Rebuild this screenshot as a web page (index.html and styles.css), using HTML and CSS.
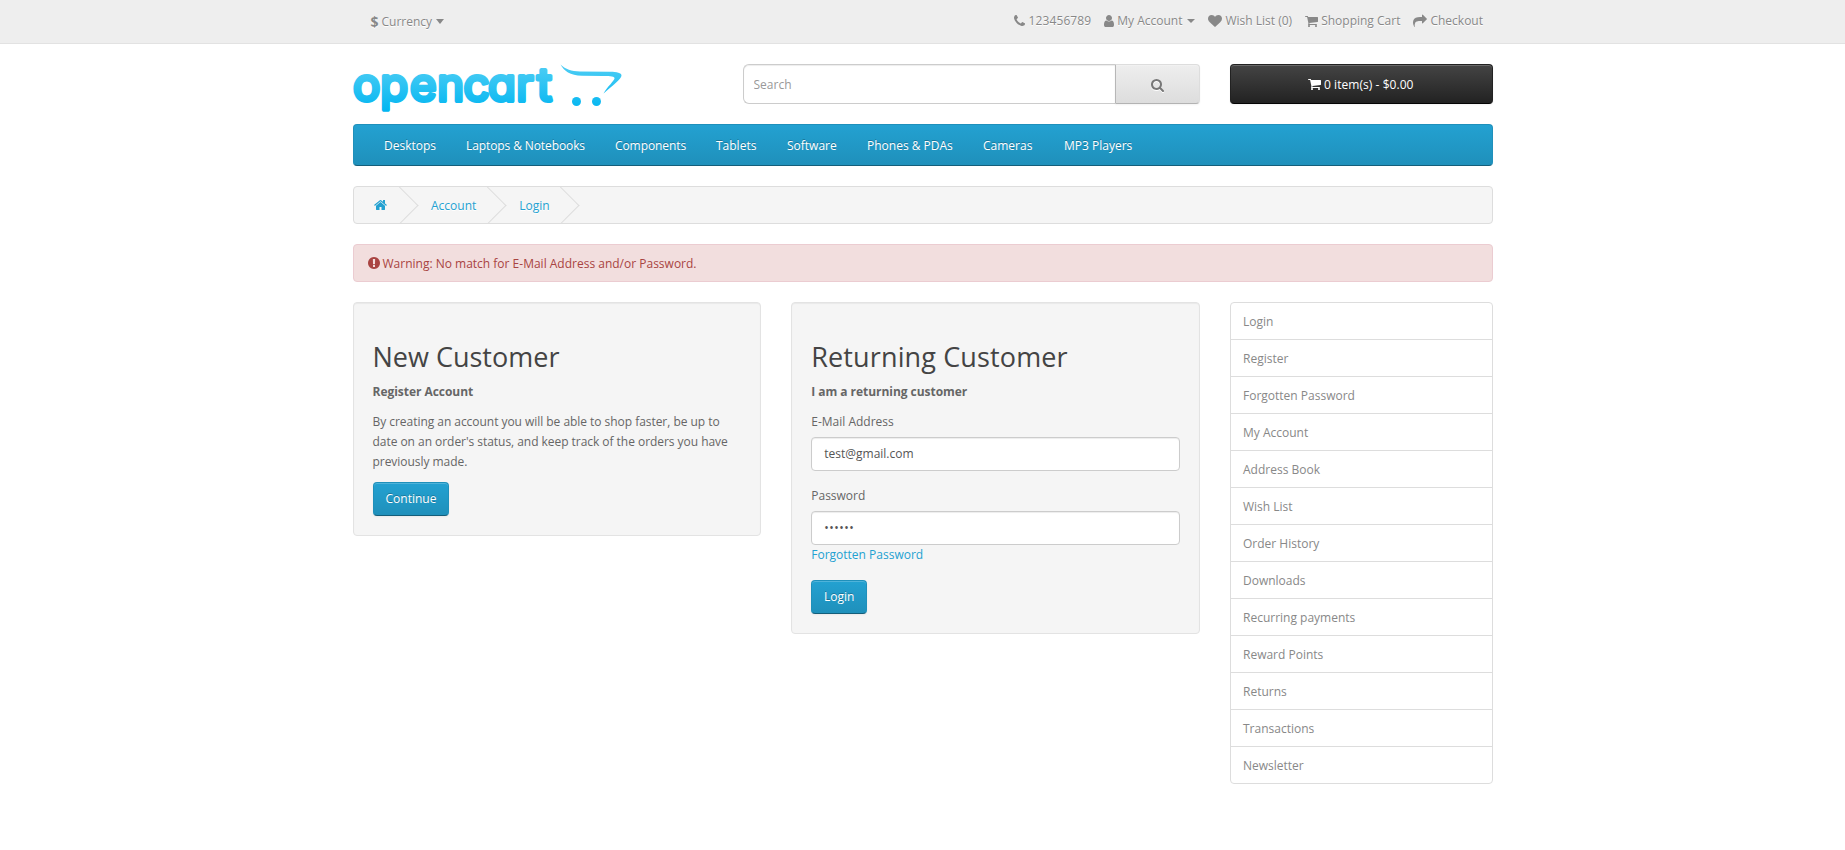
FILE: index.html
```html
<!DOCTYPE html>
<html lang="en">
<head>
<meta charset="utf-8">
<title>Account Login</title>
<link rel="stylesheet" href="styles.css">
</head>
<body>
<svg class="defs" width="0" height="0" aria-hidden="true">
  <symbol id="phone" viewBox="192 0 1408 1792"><path d="M1600 1240q0 27-10 70.5t-21 68.5q-21 50-122 106-94 51-186 51-27 0-53-3.5t-57.5-12.5-47-14.5-55.5-20.5-49-18q-98-35-175-83-127-79-264-216t-216-264q-48-77-83-175-3-9-18-49t-20.5-55.5-14.500-47-12.500-57.500-3.500-53q0-92 51-186 56-101 106-122 25-11 68.500-21t70.500-10q14 0 21 3 18 6 53 76 11 19 30 54t35 63.500 31 53.500q3 4 17.500 25t21.500 35.500 7 28.500q0 20-28.500 50t-62 55-62 53-28.500 46q0 9 5 22.500t8.500 20.500 14 24 11.500 19q76 137 174 235t235 174q2 1 19 11.500t24 14 20.500 8.500 22.500 5q18 0 46-28.500t53-62 55-62 50-28.500q14 0 28.500 7t35.500 21.500 25 17.500q25 15 53.500 31t63.500 35 54 30q70 35 76 53 3 7 3 21z"/></symbol>
  <symbol id="user" viewBox="256 0 1280 1792"><path d="M1536 1399q0 109-62.500 187t-150.500 78h-854q-88 0-150.500-78t-62.500-187q0-85 8.500-160.500t31.500-152 58.500-131 94-89 134.500-34.500q131 128 313 128t313-128q76 0 134.500 34.500t94 89 58.500 131 31.500 152 8.500 160.500zm-256-887q0 159-112.500 271.500t-271.500 112.500-271.500-112.500-112.500-271.500 112.500-271.500 271.500-112.500 271.500 112.500 112.500 271.500z"/></symbol>
  <symbol id="heart" viewBox="0 0 1792 1792"><path d="M896 1664q-26 0-44-18l-624-602q-10-8-27.500-26t-55.500-65.500-68-97.500-53.500-121-23.500-138q0-220 127-344t351-124q62 0 126.500 21.500t120 58 95.500 68.500 76 68q36-36 76-68t95.500-68.500 120-58 126.500-21.500q224 0 351 124t127 344q0 221-229 450l-623 600q-18 18-44 18z"/></symbol>
  <symbol id="cart" viewBox="64 0 1664 1792"><path d="M704 1536q0 52-38 90t-90 38-90-38-38-90 38-90 90-38 90 38 38 90zm896 0q0 52-38 90t-90 38-90-38-38-90 38-90 90-38 90 38 38 90zm128-1088v512q0 24-16.500 42.500t-40.500 21.500l-1044 122q13 60 13 70 0 16-24 64h920q26 0 45 19t19 45-19 45-45 19h-1024q-26 0-45-19t-19-45q0-11 8-31.500t16-36 21.500-40 15.500-29.500l-177-823h-204q-26 0-45-19t-19-45 19-45 45-19h256q16 0 28.500 6.500t19.500 15.500 13 24.500 8 26 5.500 29.500 4.500 26h1201q26 0 45 19t19 45z"/></symbol>
  <symbol id="share" viewBox="0 0 1792 1792"><path d="M1792 640q0 26-19 45l-512 512q-19 19-45 19t-45-19-19-45v-256h-224q-98 0-175.500 6t-154 21.500-133 42.500-105.500 69.500-80 101-48.500 138.500-17.500 181q0 55 5 123 0 6 2.500 23.500t2.500 26.500q0 15-8.500 25t-23.500 10q-16 0-28-17-7-9-13-22t-13.500-30-10.500-24q-127-285-127-451 0-199 53-333 162-403 875-403h224v-256q0-26 19-45t45-19 45 19l512 512q19 19 19 45z"/></symbol>
  <symbol id="search" viewBox="64 128 1664 1664"><path d="M1216 832q0-185-131.500-316.500t-316.500-131.500-316.500 131.500-131.500 316.500 131.500 316.500 316.500 131.500 316.500-131.500 131.500-316.500zm512 832q0 52-38 90t-90 38q-54 0-90-38l-343-342q-179 124-399 124-143 0-273.500-55.500t-225-150-150-225-55.500-273.500 55.500-273.500 150-225 225-150 273.500-55.500 273.500 55.500 225 150 150 225 55.500 273.500q0 220-124 399l343 343q37 37 37 90z"/></symbol>
  <symbol id="home" viewBox="64 0 1664 1792"><path d="M1472 992v480q0 26-19 45t-45 19h-384v-384h-256v384h-384q-26 0-45-19t-19-45v-480q0-1 .5-3t.5-3l575-474 575 474q1 2 1 6zm223-69l-62 74q-8 9-21 11h-3q-13 0-21-7l-692-577-692 577q-12 8-24 7-13-2-21-11l-62-74q-8-10-7-23.500t11-21.500l719-599q32-26 76-26t76 26l244 204v-195q0-14 9-23t23-9h192q14 0 23 9t9 23v408l219 182q10 8 11 21.500t-7 23.500z"/></symbol>
  <symbol id="warn" viewBox="128 0 1536 1792"><path d="M896 128q209 0 385.500 103t279.500 279.500 103 385.500-103 385.500-279.500 279.500-385.500 103-385.500-103-279.500-279.500-103-385.500 103-385.500 279.500-279.500 385.500-103zm128 1247v-190q0-14-9-23.500t-22-9.500h-192q-13 0-23 10t-10 23v190q0 13 10 23t23 10h192q13 0 22-9.500t9-23.500zm-2-344l18-621q0-12-10-18-10-8-24-8h-220q-14 0-24 8-10 6-10 18l17 621q0 10 10 17.500t24 7.500h185q14 0 23.500-7.500t10.500-17.500z"/></symbol>
</svg>

<nav class="top">
  <div class="container top-row">
    <button class="currency" type="button"><strong>$</strong> <span>Currency</span><i class="caret"></i></button>
    <ul class="top-links">
      <li class="number"><svg class="icon w11"><use href="#phone"/></svg>123456789</li>
      <li><svg class="icon w10"><use href="#user"/></svg>My Account<i class="caret"></i></li>
      <li><svg class="icon w14"><use href="#heart"/></svg>Wish List (0)</li>
      <li><svg class="icon w13"><use href="#cart"/></svg>Shopping Cart</li>
      <li><svg class="icon w14"><use href="#share"/></svg>Checkout</li>
    </ul>
  </div>
</nav>

<header class="container header">
  <div class="logo">
    <svg width="270" height="50" viewBox="0 0 270 50">
      <defs>
        <linearGradient id="blue" gradientUnits="userSpaceOnUse" x1="0" y1="2" x2="0" y2="48">
          <stop offset="0" stop-color="#4dcdf4"/><stop offset="1" stop-color="#00b5f1"/>
        </linearGradient>
      </defs>
      <text class="wordmark" x="0 27.300 57 84.200 110.500 135 163.300 184" y="36.500" fill="url(#blue)" stroke="url(#blue)">opencart</text>
      <path fill="url(#blue)" d="M207.500 0.500C213 5.500 218 7.300 227 7.400L257 7.800C264 8 268.500 9 268.500 11.500C268.500 15 259 22 250.500 29.500C255 22 261 17 261.500 14.500C261.800 12.500 258 12 250 12L229 11.800C217 11.500 211 7 207.500 0.500Z"/>
      <circle cx="223.500" cy="37.500" r="4.500" fill="url(#blue)"/><circle cx="243.500" cy="37.500" r="4.500" fill="url(#blue)"/>
    </svg>
  </div>
  <div class="search">
    <input type="text" placeholder="Search">
    <button type="button" aria-label="Search"><svg><use href="#search"/></svg></button>
  </div>
  <button class="cart" type="button"><svg class="icon w13"><use href="#cart"/></svg>0 item(s) - $0.00</button>
</header>

<main class="container">
  <nav class="menu">
    <a>Desktops</a><a>Laptops &amp; Notebooks</a><a>Components</a><a>Tablets</a><a>Software</a><a>Phones &amp; PDAs</a><a>Cameras</a><a>MP3 Players</a>
  </nav>
  <ul class="breadcrumb">
    <li><svg class="icon w13"><use href="#home"/></svg></li>
    <li>Account</li>
    <li>Login</li>
  </ul>
  <div class="alert"><svg class="icon w12"><use href="#warn"/></svg>Warning: No match for E-Mail Address and/or Password.</div>
  <div class="columns">
    <section class="well">
      <h2>New Customer</h2>
      <p><strong>Register Account</strong></p>
      <p>By creating an account you will be able to shop faster, be up to date on an order's status, and keep track of the orders you have previously made.</p>
      <a class="btn">Continue</a>
    </section>
    <section class="well">
      <h2 class="wide">Returning Customer</h2>
      <p><strong>I am a returning customer</strong></p>
      <form>
        <div class="field">
          <label for="email">E-Mail Address</label>
          <input id="email" type="text" value="test@gmail.com">
        </div>
        <div class="field">
          <label for="password">Password</label>
          <input id="password" type="password" value="secret">
          <a class="link">Forgotten Password</a>
        </div>
        <button class="btn submit" type="button">Login</button>
      </form>
    </section>
    <aside class="list">
      <a>Login</a><a>Register</a><a>Forgotten Password</a><a>My Account</a><a>Address Book</a><a>Wish List</a><a>Order History</a><a>Downloads</a><a>Recurring payments</a><a>Reward Points</a><a>Returns</a><a>Transactions</a><a>Newsletter</a>
    </aside>
  </div>
</main>
</body>
</html>
```
FILE: styles.css
```css
* { box-sizing: border-box; }
body {
  margin: 0;
  background: #fff;
  color: #666;
  font: 400 12px/20px "Open Sans", sans-serif;
}
input, button { font: inherit; margin: 0; }
ul { list-style: none; margin: 0; padding: 0; }
.defs { display: block; height: 0; }
.container { width: 1140px; margin: 0 auto; }
.icon { height: 14px; flex: none; fill: currentColor; margin-right: 3px; }
.w10 { width: 10px; }
.w11 { width: 11px; }
.w12 { width: 12px; }
.w13 { width: 13px; }
.w14 { width: 14px; }
.caret {
  border-top: 4px solid;
  border-left: 4px solid transparent;
  border-right: 4px solid transparent;
}

.top {
  height: 44px;
  background: #eee;
  border-bottom: 1px solid #e2e2e2;
  color: #888;
  text-shadow: 0 1px 0 #fff;
}
.top-row { display: flex; justify-content: space-between; padding: 0 9.5px 0 18px; }
.currency {
  display: flex;
  align-items: center;
  height: 43px;
  padding: 0;
  border: 0;
  background: none;
  color: inherit;
  text-shadow: inherit;
}
.currency strong { font-size: 14px; margin-right: 3px; }
.currency .caret { margin-left: 4px; border-top-width: 5px; }
.top-links { display: flex; gap: 12.5px; height: 41px; }
.top-links li { display: flex; align-items: center; }
.top-links .icon { margin-right: 3.5px; }
.top-links .number { letter-spacing: .1px; }
.top-links .caret { margin-left: 5px; margin-top: 1px; }

.header {
  display: grid;
  grid-template-columns: 360px 457.5px 262.5px;
  column-gap: 30px;
  height: 60px;
  margin-top: 20px;
}
.wordmark {
  font: 400 45.5px Inter, sans-serif;
  font-feature-settings: "cv11";
  stroke-width: 4px;
  stroke-linejoin: round;
}
.logo svg { display: block; overflow: visible; }
.search { display: flex; height: 40px; }
.search input {
  flex: 1;
  min-width: 0;
  padding: 2px 10px 0;
  border: 1px solid #ccc;
  border-right: 0;
  border-radius: 6px 0 0 6px;
  box-shadow: inset 0 1px 1px rgba(0,0,0,.075);
  outline: 0;
}
.search input::placeholder { color: #999; opacity: 1; }
.search button {
  display: flex;
  align-items: center;
  justify-content: center;
  width: 85px;
  padding: 2px 0 0;
  border: 1px solid;
  border-color: #ddd #ddd #b3b3b3 #b7b7b7;
  border-radius: 0 4px 4px 0;
  background: linear-gradient(#eee, #ddd);
  box-shadow: inset 0 1px 0 rgba(255,255,255,.2), 0 1px 2px rgba(0,0,0,.05);
  color: #777;
}
.search svg { width: 13px; height: 13px; fill: currentColor; filter: drop-shadow(0 1px 0 #fff); }
.cart {
  display: flex;
  align-items: center;
  justify-content: center;
  height: 40px;
  padding: 2px 1px 0 0;
  border: 1px solid;
  border-color: #222 #222 #040404;
  border-radius: 4px;
  background: linear-gradient(#444, #222);
  box-shadow: inset 0 1px 0 rgba(255,255,255,.2), 0 1px 2px rgba(0,0,0,.05);
  color: #fff;
  letter-spacing: .05px;
}
.cart .icon, .alert .icon { margin-bottom: 2px; }

.menu {
  display: grid;
  grid-template-columns: 82px 149px 101px 71px 80px 116px 81px auto;
  height: 42px;
  padding: 0 15.5px;
  border: 1px solid;
  border-color: #1f90bb #1f90bb #145e7a;
  border-radius: 4px;
  background: linear-gradient(#23a1d1, #1f90bb);
  color: #fff;
  text-shadow: 0 -1px 0 rgba(0,0,0,.25);
  white-space: nowrap;
}
.menu a { padding: 11px 0 9px 15px; }
.menu a:nth-child(2) { letter-spacing: -.1px; }
.menu a:nth-child(3) { letter-spacing: -.08px; }
.breadcrumb {
  display: flex;
  height: 38px;
  margin: 20px 0;
  overflow: hidden;
  border: 1px solid #ddd;
  border-radius: 4px;
  background: #f5f5f5;
  color: #23a1d1;
  text-shadow: 0 1px 0 #fff;
}
.breadcrumb li { position: relative; padding: 9px 16.5px 7px 26.5px; }
.breadcrumb li:first-child { padding: 9px 17.5px 7px 20.5px; }
.breadcrumb .icon { display: block; margin: 2px 0 0; }
.breadcrumb li::after {
  content: "";
  position: absolute;
  top: 5px;
  right: -8px;
  width: 26px;
  height: 26px;
  border: solid #ddd;
  border-width: 1px 1px 0 0;
  transform: rotate(45deg);
}
.alert {
  display: flex;
  align-items: center;
  height: 38px;
  padding: 2px 14px 0;
  margin-bottom: 20px;
  border: 1px solid #ebccd1;
  border-radius: 4px;
  background: #f2dede;
  color: #a94442;
}

.columns {
  display: grid;
  grid-template-columns: 408.75px 408.75px 262.5px;
  column-gap: 30px;
  align-items: start;
}
.well {
  padding: 19px;
  border: 1px solid #e3e3e3;
  border-radius: 4px;
  background: #f5f5f5;
  box-shadow: inset 0 1px 1px rgba(0,0,0,.05);
}
h2 { margin: 20px 0 10px; color: #444; font-size: 27px; font-weight: 400; line-height: 29.7px; }
.wide { letter-spacing: .13px; }
p { margin: 0 0 10px; letter-spacing: -.04px; }
.btn {
  display: inline-block;
  height: 34px;
  padding: 6px 12px;
  border: 1px solid;
  border-color: #1f90bb #1f90bb #145e7a;
  border-radius: 4px;
  background: linear-gradient(#23a1d1, #1f90bb);
  box-shadow: inset 0 1px 0 rgba(255,255,255,.2), 0 1px 2px rgba(0,0,0,.05);
  color: #fff;
  text-shadow: 0 -1px 0 rgba(0,0,0,.25);
  vertical-align: top;
}
.submit { width: 56px; padding: 6px 0; }
.field { margin-bottom: 15px; }
.field label { display: block; margin-bottom: 5px; }
.field input {
  display: block;
  width: 100%;
  height: 34px;
  padding: 6px 12px;
  border: 1px solid #ccc;
  border-radius: 4px;
  background: #fff;
  box-shadow: inset 0 1px 1px rgba(0,0,0,.075);
  color: #555;
}
.field input[type="password"] { letter-spacing: .5px; }
.link { display: block; color: #23a1d1; }
.list { border: 1px solid #ddd; border-radius: 4px; color: #888; }
.list a { display: block; padding: 9px 12px 7px; }
.list a + a { border-top: 1px solid #ddd; }
```
